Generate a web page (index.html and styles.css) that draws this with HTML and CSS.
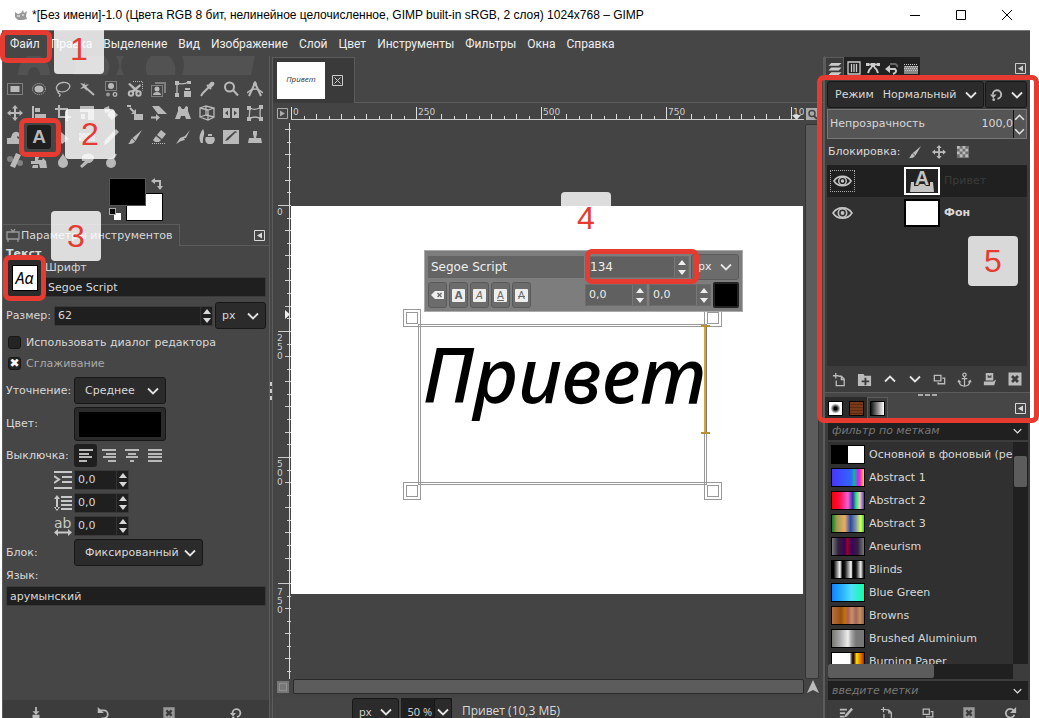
FILE: index.html
```
<!DOCTYPE html>
<html lang="ru">
<head>
  <meta charset="utf-8">
  <title>GIMP</title>
  <link rel="stylesheet" href="styles.css">
</head>
<body>
  <svg class="defs" width="0" height="0">
    <symbol id="chev" viewBox="0 0 12 8"><path d="M1 1.500 6 6.500 11 1.500" fill="none" stroke="#e4e4e4" stroke-width="1.800"/></symbol>
    <symbol id="up" viewBox="0 0 8 5"><path d="M0 5 4 0 8 5z"/></symbol>
    <symbol id="down" viewBox="0 0 8 5"><path d="M0 0 4 5 8 0z"/></symbol>
    <symbol id="menu-btn" viewBox="0 0 11 11"><path d="M.5.5h10v10H.5z" fill="none" stroke="currentColor"/><path d="M8 2.500v6L3 5.500z"/></symbol>
    <symbol id="eye" viewBox="0 0 20 14"><path d="M1 7C5 .5 15 .5 19 7 15 13.500 5 13.500 1 7z" fill="none" stroke="currentColor" stroke-width="1.600"/><circle cx="10" cy="7" r="4" fill="none" stroke="currentColor" stroke-width="1.500"/><circle cx="10" cy="7" r="1.800"/></symbol>
    <symbol id="new" viewBox="0 0 16 16"><path d="M7 4.500h3l3 3v7H4.500V9M10 4v4h3M4 1v6M1 4h6" fill="none" stroke="currentColor" stroke-width="1.400"/></symbol>
    <symbol id="dup" viewBox="0 0 16 16"><path d="M2.500 3.500h7v6h-7zM11 6.500h2.500v6h-7V11" fill="none" stroke="currentColor" stroke-width="1.400"/></symbol>
    <symbol id="del" viewBox="0 0 16 16"><path fill-rule="evenodd" d="M1.500 1.500h13v13h-13zM4 6 6 8l-2 2 2 2 2-2 2 2 2-2-2-2 2-2-2-2-2 2-2-2z"/></symbol>
    <symbol id="undo" viewBox="0 0 16 16"><path d="M4 5h5a4.500 4.500 0 0 1 0 9H6" fill="none" stroke="currentColor" stroke-width="2"/><path d="M2 1v7h7z"/></symbol>
    <symbol id="reset" viewBox="0 0 16 16"><path d="M4 8a4.500 4.500 0 1 1 5 4.500" fill="none" stroke="currentColor" stroke-width="2"/><path d="M1 8h7l-3.500 4z"/><circle cx="5" cy="13.500" r="1.500"/></symbol>
    <symbol id="brush" viewBox="0 0 16 16"><path d="M15 1 8.500 12 5.500 9zM5 9.500l3 3C7 14.500 4 15 1 15c2-1 2-4 4-5.500z"/></symbol>
    <symbol id="move" viewBox="0 0 16 16"><path d="M8 0l3 3.500H9V7h3.500V5L16 8l-3.500 3V9H9v3.500h2L8 16l-3-3.500h2V9H3.500v2L0 8l3.500-3v2H7V3.500H5z"/></symbol>
  </svg>

  <div class="window">
    <header class="titlebar">
      <svg class="wilber" viewBox="0 0 14 12"><path d="M1 3l3 2 3-1 2-3 1 3 3-2-1 5 1 3-4 1H4L1 8z"/><path d="M3 7h3M8 6h2" stroke="#fff"/></svg>
      <span class="title">*[Без имени]-1.0 (Цвета RGB 8 бит, нелинейное целочисленное, GIMP built-in sRGB, 2 слоя) 1024x768 – GIMP</span>
      <button class="win-btn" aria-label="Свернуть"><svg viewBox="0 0 12 12"><path d="M1 6.500h10"/></svg></button>
      <button class="win-btn" aria-label="Развернуть"><svg viewBox="0 0 12 12"><path d="M1.500 1.500h9v9h-9z"/></svg></button>
      <button class="win-btn" aria-label="Закрыть"><svg viewBox="0 0 12 12"><path d="M1 1l10 10M11 1 1 11"/></svg></button>
    </header>

    <nav class="menubar">
      <a href="#">Файл</a><a href="#">Правка</a><a href="#">Выделение</a><a href="#">Вид</a><a href="#">Изображение</a><a href="#">Слой</a><a href="#">Цвет</a><a href="#">Инструменты</a><a href="#">Фильтры</a><a href="#">Окна</a><a href="#">Справка</a>
      <div class="mark mark-file"></div>
      <div class="badge badge-1">1</div>
    </nav>

    <main class="main">
      <aside class="dock left">
        <svg class="mascot" viewBox="0 0 268 19">
          <path d="M15 19a18 22 0 0 1 10-19h12a18 22 0 0 1 10 19H37a6 8 0 0 0-12 0zM70 19q6-10 0-19h32q8 10 2 19zM113 0h8q-6 9 0 19h-8q6-9 0-19zM144 19q-4-12 4-19h18q8 7 6 19zM179 0h73l-4 19h-69q4-10 0-19z"/>
        </svg>
        <div class="tools">
          <button><svg viewBox="0 0 16 16"><path d="M.5 2.500h15v11H.5z" class="dash"/><path d="M3.500 5h9v6h-9z"/></svg></button>
          <button><svg viewBox="0 0 16 16"><ellipse cx="8" cy="8" rx="6.500" ry="5.500" class="dash"/><ellipse cx="8" cy="8" rx="4.500" ry="3.500"/></svg></button>
          <button><svg viewBox="0 0 16 16"><path class="ln" d="M4 11C-1 8 2 2 8 1.500s8 3 6 6-6 4-9 3c-2-1-3 1-1 2s1 2 0 3"/></svg></button>
          <button><svg viewBox="0 0 16 16"><path class="ln2" d="M6 6l9 8"/><path d="M5 1l1 3 4-1-3 3 1 4-3-3-4 1 3-3-3-3 4 1z"/></svg></button>
          <button><svg viewBox="0 0 16 16"><path d="M2.500.5h11v9h-11z" class="dash"/><circle cx="8" cy="5" r="3"/><circle cx="5" cy="13.500" r="2" opacity=".7"/><circle cx="12" cy="13.500" r="1.800" class="ln"/></svg></button>
          <button><svg viewBox="0 0 16 16"><path class="dash" d="M6 .5h9.500v9"/><path d="M1 3l2-1 9 8-2 2zM13 3l1 2-8 7-2-2z"/><circle cx="4" cy="12.500" r="2.200" class="ln2"/><circle cx="11.500" cy="12.500" r="2.200" class="ln2"/></svg></button>
          <button><svg viewBox="0 0 16 16"><path d="M.5 4.500h11v11H.5z" class="dash"/><path d="M4 1h11v11h-2V3H4z" opacity=".5"/><circle cx="6" cy="8" r="2.500"/><path d="M2 14c0-4 8-4 8 0z"/></svg></button>
          <button><svg viewBox="0 0 16 16"><path class="ln" d="M2 15V2q6 2 12-1"/><path d="M0 0h4v4H0zM12 0h4v3h-4zM0 12h4v4H0zM10 7h5v2h-5zM9 10h7v6H9z"/></svg></button>
          <button><svg viewBox="0 0 16 16"><path d="M12 1c3-1 4 1 3 3l-3 3-3-3z"/><path class="ln2" d="M10 6l-6 6-2 3M8 4l4 4"/></svg></button>
          <button><svg viewBox="0 0 16 16"><circle cx="6.500" cy="6" r="4.500" class="ln2"/><path class="ln2" d="M10 9l5 5.500"/></svg></button>
          <button><svg viewBox="0 0 16 16"><path class="ln2" d="M8 2 2 15M8 2l6 13"/><path class="ln" d="M0 12q8-8 16 0M8 0v3"/><circle cx="8" cy="3" r="2"/></svg></button>

          <button><svg><use href="#move"/></svg></button>
          <button><svg viewBox="0 0 16 16"><path d="M1 1h2v15H1zM4 3h5v4H4zM4 9h11v4H4z"/></svg></button>
          <button><svg viewBox="0 0 16 16"><path class="ln2" d="M4 0v12h12M0 4h12v12"/></svg></button>
          <button><svg viewBox="0 0 16 16"><path d="M1 1h14v14H9V7H1zM2 9h4v5H2z"/></svg></button>
          <button><svg viewBox="0 0 16 16"><path d="M1 3l5-2 1 5 3-1 5 5-6 5-5-5 2-3-4 1z"/></svg></button>
          <button><svg viewBox="0 0 16 16"><path d="M7 9h9v6H7zM9 4v5H4z"/><path class="ln2" d="M0 1h4M3 3l4 4"/></svg></button>
          <button><svg viewBox="0 0 16 16"><path d="M1 1h7l8 8H7zM5 9l4 3.500L5 16v-2.500H0v-2h5z"/></svg></button>
          <button><svg viewBox="0 0 16 16"><path d="M3 2l2-1 2 3h2l2-3 2 1v4l3 8h-5l-1-3H6l-1 3H0l3-8z"/></svg></button>
          <button><svg viewBox="0 0 16 16"><path class="ln" d="M1 3l6-2 8 2v9l-6 3-8-3zM1 3l8 2 6-2M9 5v10M1 12l6-2 8 2M7 1v9"/></svg></button>
          <button><svg viewBox="0 0 16 16"><path fill-rule="evenodd" d="M0 3h7v10H0zM9 3h7v10H9zM2 8l3 2.500v-5zM14 8l-3-2.500v5z"/></svg></button>
          <button><svg viewBox="0 0 16 16"><path class="ln" d="M2 14 3 3q5 3 11-1-2 6 0 12-6-4-12 0z"/><path d="M0 1h4v4H0zM12 0h4v4h-4zM0 12h4v4H0zM12 12h4v4h-4z"/></svg></button>

          <button><svg viewBox="0 0 16 16"><path d="M0 15V9h3c2 0 1-5 5-6 4-1 6 3 4 5-2-2-3 1 0 2h4v5z"/></svg></button>
          <button class="active" aria-label="Текст">A</button>
          <button><svg viewBox="0 0 16 16"><path d="M6 3l8 7-7 5-5-6zM2 9c-3 5 1 5 0 0z"/><path class="ln" d="M5 1v6"/></svg></button>
          <button><svg viewBox="0 0 16 16"><path d="M0 4h16v8H0z" opacity=".5"/><path d="M0 4h2v2H0zM4 4h2v2H4zM8 4h2v2H8zM2 6h2v2H2zM6 6h2v2H6zM0 8h2v4H0z"/></svg></button>
          <button><svg viewBox="0 0 16 16"><path d="M13 0l3 3L5 14l-4 2 1-5z"/></svg></button>
          <button><svg><use href="#brush"/></svg></button>
          <button><svg viewBox="0 0 16 16"><path d="M10 1l5 4-4 5-5-4zM5 7l5 4-2 2H4L2 11z"/><path class="dash" d="M1 14.500h14"/></svg></button>
          <button><svg viewBox="0 0 16 16"><path d="M15 1 11 9H9l1 2-4 1-5 3 4-6 5-2z"/></svg></button>
          <button><svg viewBox="0 0 16 16"><path d="M4 0c3 5-1 8 0 14H2C-1 9 1 4 4 0zM7 8h8c2 3 0 6-2 7H9c-2-1-4-4-2-7zM9 5h4v2H9z"/></svg></button>
          <button><svg viewBox="0 0 16 16"><path fill-rule="evenodd" d="M0 1h16v14H0zM2 12l4-1 8-8-2-1-8 7z"/><path class="ln" d="M4 13l9-9"/></svg></button>
          <button><svg viewBox="0 0 16 16"><path d="M6 2h4v3L9 9h5l1 5H1l1-5h5L6 5z"/></svg></button>

          <button><svg viewBox="0 0 16 16"><path d="M9 0l5 2-6 13-5-2z"/><circle cx="3" cy="6" r="3" opacity=".5"/><circle cx="13" cy="10" r="3" opacity=".5"/></svg></button>
          <button><svg viewBox="0 0 16 16"><path d="M4 0h4v4l-1 3h4l1-2 3 3 1 7H9l-1-4H0V8h4z"/><path d="M2 12h5v3H1z"/></svg></button>
          <button><svg viewBox="0 0 16 16"><path d="M8 0c1 4 5 6 5 10a5 5 0 0 1-10 0c0-4 4-6 5-10z"/></svg></button>
          <button><svg viewBox="0 0 16 16"><path d="M3 3c4-4 11-3 12 1 0 4-3 6-6 6l-6 5-2-2 5-5c-2 0-4 0-3-2z"/></svg></button>
          <button><svg viewBox="0 0 16 16"><circle cx="8" cy="10" r="5"/><path class="ln2" d="M10 6l3-5"/></svg></button>
          <div class="mark mark-text"></div>
          <div class="badge badge-2">2</div>
        </div>
        <div class="colors">
          <div class="swatch bg"></div>
          <div class="swatch fg"></div>
          <div class="mini-bg"></div>
          <div class="mini-fg"></div>
          <svg class="swap" viewBox="0 0 12 12"><path class="ln2" d="M3 3h6v6"/><path d="M0 3l4-3v6zM6 8h6l-3 4z"/></svg>
        </div>

        <div class="tabrow">
          <div class="tab"><svg viewBox="0 0 14 13"><path class="ln" d="M1 3h12v7H1zM5 0l2 3 2-3M2 13v-3M12 13v-3"/></svg>Параметры инструментов</div>
          <svg class="corner"><use href="#menu-btn"/></svg>
          <div class="badge badge-3">3</div>
        </div>

        <section class="options">
          <h2>Текст</h2>
          <div class="font-row">
            <button class="font-btn"><span>Aα</span></button>
            <div class="font-field">
              <label for="font">Шрифт</label>
              <input id="font" type="text" value="Segoe Script">
            </div>
            <div class="mark mark-font"></div>
          </div>
          <div class="row size-row">
            <label for="size">Размер:</label>
            <div class="spin grow"><input id="size" type="text" value="62"><span class="steps"><button><svg><use href="#up"/></svg></button><button><svg><use href="#down"/></svg></button></span></div>
            <div class="select unit"><select aria-label="Единицы"><option>px</option></select><svg><use href="#chev"/></svg></div>
          </div>
          <label class="check"><input type="checkbox">Использовать диалог редактора</label>
          <label class="check on"><input type="checkbox" checked>Сглаживание</label>
          <div class="fields">
            <label for="hint">Уточнение:</label>
            <div class="select mid"><select id="hint"><option>Среднее</option></select><svg><use href="#chev"/></svg></div>
            <label for="color">Цвет:</label>
            <button id="color" class="color-btn"><span></span></button>
            <span>Выключка:</span>
            <div class="justify">
              <button class="active"><svg viewBox="0 0 14 13"><path d="M0 0h14v2H0zM0 4h10v2H0zM0 7h13v2H0zM0 11h8v2H0z"/></svg></button>
              <button><svg viewBox="0 0 14 13"><path d="M0 0h14v2H0zM4 4h10v2H4zM1 7h13v2H1zM6 11h8v2H6z"/></svg></button>
              <button><svg viewBox="0 0 14 13"><path d="M0 0h14v2H0zM3 4h8v2H3zM1 7h12v2H1zM5 11h4v2H5z"/></svg></button>
              <button><svg viewBox="0 0 14 13"><path d="M0 0h14v2H0zM0 4h14v2H0zM0 7h14v2H0zM0 11h14v2H0z"/></svg></button>
            </div>
            <label class="ic" for="indent"><svg viewBox="0 0 18 18"><path d="M0 0h18v2H0zM8 5h10v2H8zM8 10h10v2H8zM0 16h18v2H0z"/><path class="ln2" d="M0 5l5 3.500L0 12"/></svg></label>
            <div class="spin small"><input id="indent" type="text" value="0,0"><span class="steps"><button><svg><use href="#up"/></svg></button><button><svg><use href="#down"/></svg></button></span></div>
            <label class="ic" for="line"><svg viewBox="0 0 18 18"><path d="M7 2h11v2H7zM7 6h11v2H7zM7 10h11v2H7zM7 14h11v2H7zM2 3h2v12H2zM0 5l3-4 3 4zM0 13l3 4 3-4z"/></svg></label>
            <div class="spin small"><input id="line" type="text" value="0,0"><span class="steps"><button><svg><use href="#up"/></svg></button><button><svg><use href="#down"/></svg></button></span></div>
            <label class="ic letters" for="letter"><b>ab</b><svg viewBox="0 0 18 7"><path d="M0 3.500 4 0v2.500h10V0l4 3.500L14 7V4.500H4V7z"/></svg></label>
            <div class="spin small"><input id="letter" type="text" value="0,0"><span class="steps"><button><svg><use href="#up"/></svg></button><button><svg><use href="#down"/></svg></button></span></div>
            <label for="box">Блок:</label>
            <div class="select wide"><select id="box"><option>Фиксированный</option></select><svg><use href="#chev"/></svg></div>
          </div>
          <label class="lang" for="lang">Язык:</label>
          <input id="lang" type="text" value="арумынский">
        </section>
        <footer class="actions">
          <button><svg viewBox="0 0 16 16"><path d="M7 1h2v5h3L8 10 4 6h3zM4 10h8v6H4z"/></svg></button>
          <button><svg><use href="#undo"/></svg></button>
          <button class="dim"><svg><use href="#del"/></svg></button>
          <button><svg><use href="#reset"/></svg></button>
        </footer>
        <div class="side-grip"></div>
      </aside>

      <section class="center">
        <div class="image-tabs">
          <div class="image-tab"><span class="thumb">Привет</span><svg viewBox="0 0 11 11"><path d="M.5.5h10v10H.5zM2.500 2.500l6 6M8.500 2.500l-6 6" fill="none" stroke="#ccc"/></svg></div>
        </div>
        <div class="work">
          <svg class="corner-btn flip" viewBox="0 0 11 11"><use href="#menu-btn"/></svg>
          <svg class="ruler-h">
            <pattern id="ticks-h" width="125" height="15" patternUnits="userSpaceOnUse">
              <path d="M.5 1v13M13.500 10v4M25.500 8v6M38.500 10v4M50.500 8v6M63.500 10v4M75.500 8v6M88.500 10v4M100.500 8v6M113.500 10v4" stroke="#ddd"/>
            </pattern>
            <rect width="100%" height="15" fill="url(#ticks-h)"/>
            <rect y="13" width="100%" height="1" fill="#ccc"/>
            <text x="2" y="9">0</text><text x="127" y="9">250</text><text x="252" y="9">500</text><text x="377" y="9">750</text><text x="502" y="9">1000</text>
            <path d="M501 9h9l-4.500 5z" fill="#ddd"/>
          </svg>
          <svg class="corner-btn zoom" viewBox="0 0 12 12"><path d="M0 0h12v12H0z" fill="#aaa"/><circle cx="6" cy="5.500" r="3" fill="none" stroke="#444" stroke-width="1.500"/><path d="M8 8l3 3" stroke="#444" stroke-width="2"/></svg>

          <svg class="ruler-v">
            <pattern id="ticks-v" y="84" width="14" height="126" patternUnits="userSpaceOnUse">
              <path d="M1 .5h13M10 13.500h4M8 25.500h6M10 38.500h4M8 50.500h6M10 63.500h4M8 75.500h6M10 88.500h4M8 101.500h6M10 113.500h4" stroke="#ccc"/>
            </pattern>
            <rect y="2" width="14" height="100%" fill="url(#ticks-v)"/>
            <rect x="12" y="2" width="1" height="100%" fill="#ddd"/>
            <text x="0" y="94">0</text>
            <text><tspan x="0" y="220">2</tspan><tspan x="0" y="229">5</tspan><tspan x="0" y="238">0</tspan></text>
            <text><tspan x="0" y="346">5</tspan><tspan x="0" y="355">0</tspan><tspan x="0" y="364">0</tspan></text>
            <text><tspan x="0" y="474">7</tspan><tspan x="0" y="483">5</tspan><tspan x="0" y="492">0</tspan></text>
            <path d="M8 189v9l5-4.500z" fill="#eee"/>
          </svg>
          <div class="viewport">
            <div class="badge badge-4">&nbsp;</div>
            <div class="canvas">
              <div class="step-four">4</div>
              <div class="text-frame">
                <span class="script">Привет</span>
                <i class="handle tl"></i><i class="handle tr"></i><i class="handle bl"></i><i class="handle br"></i>
                <i class="caret"></i>
              </div>
              <div class="text-bar">
                <div class="bar-row">
                  <input class="bar-font" type="text" aria-label="Шрифт" value="Segoe Script">
                  <div class="spin bar-size"><input type="text" aria-label="Размер" value="134"><span class="steps"><button><svg><use href="#up"/></svg></button><button><svg><use href="#down"/></svg></button></span></div>
                  <div class="select bar-unit"><select aria-label="Единицы"><option>px</option></select><svg><use href="#chev"/></svg></div>
                </div>
                <div class="bar-row">
                  <button class="style"><svg viewBox="0 0 14 12"><path fill-rule="evenodd" d="M0 6l4-4h9v8H4zM6 4.500 7.500 6 6 7.500l1 1L8.500 7 10 8.500l1-1L9.500 6 11 4.500l-1-1L8.500 5 7 3.500z"/></svg></button>
                  <button class="style"><b>A</b></button>
                  <button class="style"><em>A</em></button>
                  <button class="style"><u>A</u></button>
                  <button class="style"><s>A</s></button>
                  <div class="spin bar-num first"><input type="text" aria-label="Базовая линия" value="0,0"><span class="steps"><button><svg><use href="#up"/></svg></button><button><svg><use href="#down"/></svg></button></span></div>
                  <div class="spin bar-num"><input type="text" aria-label="Кернинг" value="0,0"><span class="steps"><button><svg><use href="#up"/></svg></button><button><svg><use href="#down"/></svg></button></span></div>
                  <button class="bar-color" aria-label="Цвет текста"></button>
                </div>
                <div class="mark mark-size"></div>
              </div>
            </div>
          </div>
          <div class="scroll-v"></div>

          <svg class="corner-btn quick" viewBox="0 0 12 12"><path d="M0 0h12v12H0z" fill="#777"/><path d="M2.500 2.500h7v7h-7z" fill="none" stroke="#aaa" stroke-dasharray="1 1"/></svg>
          <div class="scroll-h"></div>
          <svg class="corner-btn nav" viewBox="0 0 12 13"><path d="M6 0l6 13-6-3-6 3z" fill="#bbb"/></svg>
        </div>
        <div class="status">
          <div class="select"><select aria-label="Единицы"><option>px</option></select><svg><use href="#chev"/></svg></div>
          <div class="zoom-box"><input type="text" aria-label="Масштаб" value="50 %"><button><svg><use href="#chev"/></svg></button></div>
          <span>Привет (10,3 МБ)</span>
        </div>
      </section>

      <aside class="dock right">
        <div class="dialog-tabs">
          <button class="current"><svg viewBox="0 0 14 15"><path d="M3 1h11l-3 3H0zM3 6h11l-3 3H0zM3 11h11l-3 3H0z"/></svg></button>
          <button><svg viewBox="0 0 14 14"><path class="ln" d="M1 1h12v12H1zM4.500 3v8M7 3v8M9.500 3v8"/></svg></button>
          <button><svg viewBox="0 0 14 14"><path class="ln2" d="M1 3.500h12M2 12q1-4 4-6M12 12q-1-4-4-6"/><path d="M0 2h3v3H0zM5 2h4v4H5zM11 2h3v3h-3z"/></svg></button>
          <button><svg viewBox="0 0 14 14"><path class="ln2" d="M5 3h5q3 1 2 3" opacity=".4"/><path class="ln2" d="M4 8h6q3 3-2 5"/><path d="M0 8l5-4v8z"/></svg></button>
          <button><svg viewBox="0 0 14 14"><path d="M0 5h14v8H0z" opacity=".6"/><path class="dash" d="M0 3.500h14M1 5.500h13M0 7.500h14M1 9.500h13"/></svg></button>
          <svg class="corner"><use href="#menu-btn"/></svg>
        </div>
        <section class="layers">
          <div class="mode-row">
            <div class="select mode"><label for="mode">Режим</label><select id="mode"><option>Нормальный</option></select><svg><use href="#chev"/></svg></div>
            <button class="mode-switch"><svg class="i16"><use href="#reset"/></svg><svg class="i12"><use href="#chev"/></svg></button>
          </div>
          <div class="opacity"><label for="opacity">Непрозрачность</label><input id="opacity" type="text" value="100,0"><span class="arrows"><svg class="turn"><use href="#chev"/></svg><svg><use href="#chev"/></svg></span></div>
          <div class="lock"><span>Блокировка:</span>
            <button><svg><use href="#brush"/></svg></button>
            <button><svg><use href="#move"/></svg></button>
            <button><svg viewBox="0 0 15 15"><path d="M1 1h13v13H1z" opacity=".4"/><path d="M1 1h3v3H1zM7 1h3v3H7zM4 4h3v3H4zM10 4h3v3h-3zM1 7h3v3H1zM7 7h3v3H7zM4 10h3v3H4zM10 10h3v3h-3z"/></svg></button>
          </div>
          <ul class="layer-list">
            <li class="selected"><svg class="eye focus"><use href="#eye"/></svg><span class="layer-thumb text-layer"><b>A</b><svg viewBox="0 0 24 12"><path d="M1 2h3v4h4l2-2h4l2 2h4V2h3l1 10H0z"/></svg></span><span>Привет</span></li>
            <li><svg class="eye"><use href="#eye"/></svg><span class="layer-thumb"></span><b>Фон</b></li>
          </ul>
          <div class="layer-actions">
            <button><svg><use href="#new"/></svg></button>
            <button><svg viewBox="0 0 16 16"><path fill-rule="evenodd" d="M1 2h6l1 2h7v11H1zM8 6v3H5v2h3v3h2v-3h3V9h-3V6z"/></svg></button>
            <button><svg class="i12 turn"><use href="#chev"/></svg></button>
            <button><svg class="i12"><use href="#chev"/></svg></button>
            <button><svg><use href="#dup"/></svg></button>
            <button><svg viewBox="0 0 16 16"><circle cx="8" cy="3" r="1.800" class="ln"/><path class="ln" d="M8 5v10M5 7h6M2 10q1 5 6 5t6-5M1 11l1-2 2 2M15 11l-1-2-2 2"/></svg></button>
            <button><svg viewBox="0 0 16 16"><path d="M4 1h8v8H4zM2 10h10l3-2-2 6H2z"/><path d="M6 3l2 1.500L10 3v3H6z" fill="#444"/></svg></button>
            <button><svg class="big"><use href="#del"/></svg></button>
          </div>
          <div class="badge badge-5">5</div>
        </section>
        <div class="grip"></div>
        <div class="brush-tabs">
          <button><i class="round"></i></button>
          <button><i class="wood"></i></button>
          <button class="current"><i class="fade"></i></button>
          <svg class="corner"><use href="#menu-btn"/></svg>
        </div>
        <section class="gradients">
          <div class="tag-field"><input type="text" aria-label="Фильтр" placeholder="фильтр по меткам"><svg><use href="#chev"/></svg></div>
          <div class="list-wrap">
            <ul class="gradient-list">
              <li><i class="g-fg"></i>Основной в фоновый (резкий)</li>
              <li><i class="g-a1"></i>Abstract 1</li>
              <li><i class="g-a2"></i>Abstract 2</li>
              <li><i class="g-a3"></i>Abstract 3</li>
              <li><i class="g-an"></i>Aneurism</li>
              <li><i class="g-bl"></i>Blinds</li>
              <li><i class="g-bg"></i>Blue Green</li>
              <li><i class="g-br"></i>Browns</li>
              <li><i class="g-al"></i>Brushed Aluminium</li>
              <li><i class="g-bp"></i>Burning Paper</li>
            </ul>
            <div class="list-scroll"><span></span></div>
          </div>
          <div class="list-hscroll"><span></span></div>
          <div class="tag-field"><input type="text" aria-label="Метки" placeholder="введите метки"><svg><use href="#chev"/></svg></div>
        </section>
        <footer class="actions">
          <button><svg viewBox="0 0 16 16"><path d="M1 3h8v2H1zM1 7h6v2H1zM1 11h5v2H1zM14 2l2 2-7 8-3 1 1-3z"/></svg></button>
          <button><svg><use href="#new"/></svg></button>
          <button><svg><use href="#dup"/></svg></button>
          <button class="dim"><svg><use href="#del"/></svg></button>
          <button><svg viewBox="0 0 16 16"><path class="ln2" d="M12 5a5 5 0 1 0 1 5"/><path d="M15 1v7H8z"/></svg></button>
        </footer>
        <div class="mark mark-layers"></div>
      </aside>
    </main>
  </div>
</body>
</html>
```
FILE: styles.css
```
* {
  box-sizing: border-box;
}

body {
  margin: 0;
  background: #fff;
  font: 11px/14px "DejaVu Sans", sans-serif;
  color: #d8d8d8;
  overflow: hidden;
}

button, input, select {
  margin: 0;
  padding: 0;
  border: 0;
  background: none;
  color: inherit;
  font: inherit;
  border-radius: 0;
  appearance: none;
  min-width: 0;
}

button {
  display: flex;
  align-items: center;
  justify-content: center;
}

svg {
  display: block;
  flex: none;
  fill: currentColor;
}

.defs {
  position: absolute;
}

ul, h2 {
  margin: 0;
  padding: 0;
  list-style: none;
}

.ln, .ln2, .dash {
  fill: none;
  stroke: currentColor;
}

.ln { stroke-width: 1.3; }
.ln2 { stroke-width: 2; }
.dash { stroke-dasharray: 1 1; }

/* window frame */
.window {
  display: flex;
  flex-direction: column;
  height: 100vh;
  margin: 0 9px 0 2px;
}

.titlebar {
  display: flex;
  align-items: center;
  height: 30px;
  background: #fff;
  color: #000;
  font: 12px/16px "Liberation Sans", sans-serif;
}

.wilber {
  width: 14px;
  height: 12px;
  margin: 0 4px 0 12px;
  color: #999;
}

.title {
  flex: 1;
  white-space: nowrap;
}

.win-btn {
  width: 46px;
  height: 28px;
}

.win-btn svg {
  width: 12px;
  height: 12px;
  fill: none;
  stroke: #000;
}

.menubar {
  position: relative;
  display: flex;
  gap: 11px;
  height: 26px;
  padding: 5px 8px;
  border-top: 1px solid #777;
  background: #464646;
  font: 12px/16px Roboto, sans-serif;
}

.menubar a {
  color: #eee;
  text-decoration: none;
}

.main {
  display: grid;
  grid-template-columns: 268px 1fr 206px;
  grid-template-rows: 1fr;
  flex: 1;
  min-height: 0;
  background: #464646;
}

/* step marks */
.mark {
  position: absolute;
  z-index: 5;
  border: 5px solid #e53b30;
  border-radius: 7px;
  pointer-events: none;
}

.badge {
  position: absolute;
  z-index: 4;
  width: 50px;
  height: 50px;
  border-radius: 4px;
  background: rgba(255, 255, 255, 0.82);
  color: #e53b30;
  font: 32px/50px "Liberation Sans", sans-serif;
  text-align: center;
}

.mark-file { left: -2px; top: -1px; width: 52px; height: 33px; }
.badge-1 { left: 52px; top: -7px; }
.mark-text { left: 16px; top: 41px; width: 42px; height: 39px; }
.badge-2 { left: 62px; top: 32px; }
.badge-3 { left: 48px; top: -13px; }
.mark-font { left: -3px; top: -4px; width: 43px; height: 46px; }
.badge-4 { left: 270px; top: 71px; }
.mark-size { left: 160px; top: -2px; width: 114px; height: 35px; }
.badge-5 { right: 12px; top: 156px; }
.mark-layers { left: -8px; right: -9px; top: 19px; height: 348px; }

/* shared controls */
.select {
  position: relative;
  display: flex;
  align-items: center;
  height: 27px;
  border: 1px solid #171717;
  border-radius: 3px;
  background: #2b2b2b;
}

.select select {
  flex: 1;
  height: 100%;
  padding: 0 20px 0 6px;
}

.select svg {
  position: absolute;
  right: 6px;
  width: 12px;
  height: 8px;
  pointer-events: none;
}

.spin {
  display: flex;
  height: 20px;
  background: #1f1f1f;
  border: 1px solid #3a3a3a;
}

.spin input {
  flex: 1;
  width: 0;
  padding: 0 3px;
}

.steps {
  display: flex;
  flex-direction: column;
  width: 12px;
  border-left: 1px solid #333;
}

.steps button {
  flex: 1;
}

.steps svg {
  width: 8px;
  height: 5px;
}

.corner {
  width: 11px;
  height: 11px;
}

.i12 { width: 12px; height: 8px; }
.i16 { width: 15px; height: 15px; }
.turn { transform: rotate(180deg); }

/* left dock */
.dock {
  position: relative;
  display: flex;
  flex-direction: column;
  min-height: 0;
  min-width: 0;
}

.left {
  border-left: 1px solid #5c5c5c;
  border-right: 1px solid #5c5c5c;
}

.side-grip {
  position: absolute;
  right: -3px;
  top: 326px;
  width: 2px;
  height: 18px;
  background: repeating-linear-gradient(#ccc 0 4px, transparent 4px 7px);
}

.mascot {
  width: 268px;
  height: 19px;
  color: #525252;
}

.tools {
  position: relative;
  display: grid;
  grid-template-columns: repeat(11, 24px);
  grid-auto-rows: 24px;
  height: 98px;
  margin-top: 2px;
  color: #b9b9b9;
}

.tools svg {
  width: 16px;
  height: 16px;
}

.tools .active {
  border-radius: 3px;
  background: #1f1f1f;
  font: bold 19px/24px "Liberation Sans", sans-serif;
}

.colors {
  position: relative;
  height: 49px;
}

.swatch {
  position: absolute;
  width: 37px;
  height: 28px;
  border: 1px solid #222;
}

.fg { left: 106px; top: 3px; background: #000; border-color: #555; }
.bg { left: 123px; top: 18px; background: #fff; border-color: #000; }

.mini-fg, .mini-bg {
  position: absolute;
  width: 7px;
  height: 7px;
}

.mini-fg { left: 106px; top: 33px; background: #000; border: 1px solid #aaa; }
.mini-bg { left: 111px; top: 38px; background: #fff; }

.swap {
  position: absolute;
  left: 148px;
  top: 3px;
  width: 12px;
  height: 12px;
  color: #bbb;
}

.tabrow {
  position: relative;
  display: flex;
  align-items: center;
  justify-content: space-between;
  height: 22px;
  padding-right: 4px;
}

.tabrow::after {
  content: "";
  position: absolute;
  left: 177px;
  right: 0;
  bottom: 0;
  border-bottom: 1px solid #5c5c5c;
}

.tab {
  display: flex;
  align-items: center;
  gap: 1px;
  width: 177px;
  height: 22px;
  padding-left: 3px;
  border: 1px solid #5c5c5c;
  border-width: 1px 1px 0 0;
  white-space: nowrap;
}

.tab svg {
  width: 14px;
  height: 13px;
  color: #999;
}

.options {
  flex: 1;
  padding: 0 3px;
  min-height: 0;
}

.options h2 {
  height: 13px;
  font-size: 11px;
  line-height: 16px;
}

.font-row {
  position: relative;
  display: flex;
  height: 38px;
}

.font-btn {
  width: 37px;
  background: #2b2b2b;
}

.font-btn span {
  width: 26px;
  height: 26px;
  border: 1px solid #000;
  background: #fff;
  color: #000;
  font: italic 16px/24px "Noto Sans", sans-serif;
}

.font-field {
  flex: 1;
  display: flex;
  flex-direction: column;
}

.font-field label {
  height: 18px;
  padding-left: 2px;
  line-height: 18px;
}

.options input[type="text"] {
  background: #1f1f1f;
}

.font-field input {
  height: 20px;
  padding-left: 4px;
  border: 1px solid #3a3a3a;
}

.row {
  display: flex;
  align-items: center;
  gap: 2px;
}

.size-row {
  height: 27px;
  margin-top: 5px;
}

.grow { flex: 1; margin-left: 1px; }
.unit { width: 51px; }

.check {
  display: flex;
  align-items: center;
  gap: 5px;
  height: 21px;
}

.size-row + .check {
  margin-top: 3px;
}

.check input {
  display: grid;
  place-items: center;
  width: 13px;
  height: 13px;
  margin-left: 2px;
  border: 1px solid #171717;
  border-radius: 3px;
  background: #242424;
}

.check input:checked::before {
  content: "✖";
  color: #fff;
  font-size: 12px;
  line-height: 11px;
}

.on { color: #aaa; }

.fields {
  display: grid;
  grid-template-columns: 66px 1fr;
  grid-template-rows: 27px 34px 23px 20px 20px 20px 27px;
  gap: 3px 2px;
  align-items: center;
  margin-top: 3px;
}

.mid { width: 92px; }
.wide { width: 129px; }
.mid select, .wide select { padding-left: 10px; }

.color-btn {
  width: 92px;
  height: 34px;
  border: 1px solid #171717;
  border-radius: 3px;
  background: #2b2b2b;
}

.color-btn span {
  width: 82px;
  height: 25px;
  background: #000;
}

.justify {
  display: flex;
  color: #b9b9b9;
}

.justify button {
  width: 23px;
  height: 23px;
  border-radius: 3px;
}

.justify .active { background: #1f1f1f; }
.justify svg { width: 14px; height: 13px; }

.ic {
  justify-self: end;
  color: #c8c8c8;
}

.ic svg {
  width: 18px;
  height: 18px;
}

.letters b {
  display: block;
  font: 14px/12px "DejaVu Sans", sans-serif;
}

.letters svg { height: 7px; }
.small { width: 55px; }

.lang {
  display: block;
  height: 18px;
  line-height: 20px;
}

#lang {
  width: 100%;
  height: 20px;
  margin-top: 2px;
  padding: 0 3px;
  border: 1px solid #3a3a3a;
}

.actions {
  display: flex;
  height: 18px;
  padding-top: 5px;
  background: #3c3c3c;
  overflow: hidden;
  color: #bbb;
}

.actions button {
  flex: 1;
  height: 16px;
}

.actions svg {
  width: 14px;
  height: 14px;
}

.dim { color: #999; }

/* image window */
.center {
  display: flex;
  flex-direction: column;
  min-width: 0;
  min-height: 0;
  margin: 1px 0 0 2px;
  border: solid #5c5c5c;
  border-width: 0 1px;
}

.image-tabs {
  height: 46px;
  border-bottom: 1px solid #5c5c5c;
}

.image-tab {
  display: flex;
  align-items: center;
  gap: 7px;
  width: 82px;
  height: 46px;
  padding-left: 4px;
  border: 1px solid #5c5c5c;
  border-width: 1px 1px 0 0;
  background: #3a3a3a;
}

.image-tab svg {
  width: 11px;
  height: 11px;
}

.thumb {
  width: 48px;
  height: 37px;
  background: #fff;
  color: #444;
  font: italic 8px/34px "Noto Sans", sans-serif;
  text-align: center;
}

.work {
  display: grid;
  grid-template-columns: 14px 1fr 15px;
  grid-template-rows: 15px 1fr 15px;
  flex: 1;
  min-height: 0;
  padding: 3px 4px 4px;
  background: #444;
}

.corner-btn {
  width: 11px;
  height: 11px;
  align-self: center;
  color: #aaa;
}

.flip { transform: scaleX(-1); }
.zoom, .quick { width: 12px; height: 12px; }
.zoom { justify-self: center; }
.nav { width: 12px; height: 13px; justify-self: end; }

.ruler-h {
  width: 100%;
  height: 15px;
}

.ruler-v {
  width: 14px;
  height: 100%;
}

.ruler-h text, .ruler-v text {
  font-size: 9px;
  fill: #ccc;
}

.viewport {
  position: relative;
  overflow: hidden;
  min-height: 0;
}

.canvas {
  position: absolute;
  left: 0;
  top: 85px;
  right: 1px;
  height: 388px;
  background: #fff;
}

.viewport .badge-4 { z-index: 0; }

.step-four {
  position: absolute;
  left: 270px;
  top: -13px;
  width: 50px;
  color: #e53b30;
  font: 32px/50px "Liberation Sans", sans-serif;
  text-align: center;
}

.text-frame {
  position: absolute;
  left: 127px;
  top: 118px;
  width: 289px;
  height: 161px;
  border: 3px double #999;
}

.script {
  position: absolute;
  left: 2px;
  top: 2px;
  color: #000;
  font: italic 500 76px/90px "Noto Sans", sans-serif;
}

.handle {
  position: absolute;
  width: 18px;
  height: 18px;
  border: 4px double #999;
}

.tl { left: -18px; top: -18px; }
.tr { right: -18px; top: -18px; }
.bl { left: -18px; bottom: -18px; }
.br { right: -18px; bottom: -18px; }

.caret {
  position: absolute;
  right: -3px;
  top: -2px;
  width: 3px;
  height: 109px;
  background: #d9a52c;
  border: solid #777;
  border-width: 0 1px 0 0;
}

.caret::before, .caret::after {
  content: "";
  position: absolute;
  left: -3px;
  width: 9px;
  height: 2px;
  background: #b98f35;
}

.caret::before { top: 0; }
.caret::after { bottom: 0; }

.text-bar {
  position: absolute;
  left: 133px;
  top: 44px;
  width: 319px;
  padding: 3px;
  border: 1px solid #aaa;
  background: #7d7d7d;
  color: #eee;
}

.bar-row {
  display: flex;
  align-items: center;
  gap: 2px;
  height: 26px;
}

.bar-row + .bar-row {
  margin-top: 2px;
}

.bar-font {
  width: 156px;
  height: 22px;
  padding: 0 3px;
  background: #646464;
  font-size: 12px;
}

.text-bar .spin {
  height: 22px;
  border-color: #6c6c6c;
  background: #606060;
}

.text-bar .steps {
  width: 14px;
  border-color: #777;
  background: #666;
}

.bar-size {
  width: 103px;
  font-size: 12px;
}

.bar-unit {
  flex: 1;
  height: 26px;
  border-color: #5a5a5a;
  background: #6c6c6c;
}

.style {
  width: 19px;
  height: 26px;
  border: 1px solid #5a5a5a;
  border-radius: 3px;
  background: #6c6c6c;
}

.style svg {
  width: 14px;
  height: 12px;
}

.style b, .style em, .style u, .style s {
  width: 13px;
  height: 13px;
  border-radius: 1px;
  background: #eee;
  color: #666;
  font-size: 10px;
  line-height: 13px;
}

.bar-num { width: 62px; }
.first { margin-left: auto; }

.bar-color {
  width: 26px;
  height: 26px;
  border: 2px solid #222;
  border-radius: 2px;
  background: #000;
}

.scroll-v {
  margin: 3px 0 0 1px;
  border: 1px solid #333;
  border-radius: 2px;
  background: #5c5c5c;
}

.scroll-h {
  margin-left: 2px;
  border: 1px solid #2a2a2a;
  border-radius: 2px;
  background: #5c5c5c;
}

.status {
  display: flex;
  align-items: flex-start;
  gap: 2px;
  height: 20px;
  padding-left: 79px;
  overflow: hidden;
  font: 12px/26px "Open Sans", sans-serif;
}

.status .select {
  width: 47px;
  font-size: 11px;
}

.zoom-box {
  display: flex;
  width: 51px;
  height: 27px;
  background: #1f1f1f;
  font-size: 11px;
}

.zoom-box input {
  width: 33px;
  padding-right: 2px;
  text-align: right;
}

.zoom-box button {
  width: 18px;
  border: 1px solid #171717;
  border-radius: 3px;
  background: #2b2b2b;
}

.zoom-box svg {
  width: 12px;
  height: 8px;
}

.status span { margin-left: 8px; }

/* right dock */
.right {
  border-left: 1px solid #5c5c5c;
  background: #3c3c3c;
}

.dialog-tabs, .brush-tabs {
  display: flex;
  align-items: center;
  padding-right: 4px;
  background: #464646;
}

.dialog-tabs {
  height: 24px;
  color: #ccc;
}

.dialog-tabs button {
  width: 19px;
  height: 22px;
  background: #222;
}

.dialog-tabs button svg {
  width: 14px;
  height: 14px;
}

.dialog-tabs .current, .brush-tabs .current {
  background: #3c3c3c;
  border: 1px solid #5c5c5c;
  border-bottom: 0;
}

.dialog-tabs .corner, .brush-tabs .corner {
  margin-left: auto;
}

.layers {
  position: relative;
  padding: 1px 3px 0 2px;
}

.mode-row {
  display: flex;
  gap: 1px;
}

.mode {
  flex: 1;
  padding-left: 7px;
}

.mode select { padding: 0 0 0 9px; }

.mode-switch {
  width: 42px;
  gap: 7px;
  border: 1px solid #171717;
  border-radius: 3px;
  background: #2b2b2b;
  color: #bbb;
}

.opacity {
  display: flex;
  height: 30px;
  margin-top: 1px;
  border: 1px solid #777;
  background: #555;
  line-height: 28px;
}

.opacity label { padding-left: 2px; }

.opacity input {
  flex: 1;
  text-align: right;
}

.arrows {
  display: flex;
  flex-direction: column;
  justify-content: center;
  gap: 7px;
  width: 13px;
  border-left: 1px solid #111;
}

.arrows svg {
  width: 11px;
  height: 7px;
}

.lock {
  display: flex;
  align-items: center;
  gap: 10px;
  height: 26px;
  padding-left: 1px;
  color: #bbb;
}

.lock span { margin-right: -2px; color: #d8d8d8; }

.lock svg {
  width: 14px;
  height: 14px;
}

.layer-list {
  height: 201px;
  background: #303030;
}

.layer-list li {
  display: flex;
  align-items: center;
  height: 32px;
  padding-left: 3px;
}

.layer-list .selected {
  background: #202020;
  color: #3b3b3b;
}

.eye {
  width: 25px;
  height: 22px;
  margin-right: 49px;
  padding: 2px;
  color: #c4c4c4;
}

.focus { border: 1px dotted #aaa; }

.layer-thumb {
  position: relative;
  display: flex;
  flex-direction: column;
  align-items: center;
  width: 36px;
  height: 28px;
  margin-right: 4px;
  border: 2px solid #000;
  background: #fff;
}

.text-layer {
  border-color: #fff;
  background: #222;
  color: #c4c4c4;
}

.text-layer b {
  font: bold 20px/18px "Liberation Sans", sans-serif;
}

.text-layer svg {
  position: absolute;
  bottom: 1px;
  width: 24px;
  height: 12px;
}

.layer-actions {
  display: flex;
  height: 26px;
  color: #bbb;
}

.layer-actions button { flex: 1; }
.layer-actions svg { width: 15px; height: 15px; }
.layer-actions .i12 { width: 12px; height: 8px; }
.layer-actions .big { width: 16px; height: 16px; }

.grip {
  height: 5px;
  border-top: 1px solid #5c5c5c;
  background: repeating-linear-gradient(90deg, #aaa 0 5px, #464646 5px 7px) 93px 1px / 19px 2px no-repeat #464646;
}

.brush-tabs {
  height: 22px;
}

.brush-tabs button {
  width: 21px;
  height: 22px;
  background: #2b2b2b;
}

.brush-tabs i {
  width: 15px;
  height: 15px;
  border: 1px solid #000;
}

.round { background: radial-gradient(circle, #000 15%, #fff 55%); }
.wood { background: repeating-linear-gradient(#7b3818 0 2px, #5f2a12 2px 3px); }
.fade { background: linear-gradient(90deg, #111, #fff); }

.gradients {
  display: flex;
  flex-direction: column;
  flex: 1;
  min-height: 0;
  padding: 2px 2px 0 3px;
}

.tag-field {
  display: flex;
  align-items: center;
  height: 19px;
  padding: 0 6px 0 4px;
  background: #202020;
}

.tag-field input {
  flex: 1;
}

.tag-field input::placeholder {
  color: #777;
  opacity: 1;
  font-style: italic;
}

.tag-field svg {
  width: 9px;
  height: 6px;
}

.list-wrap {
  display: flex;
  flex: 1;
  min-height: 0;
  margin-top: 2px;
}

.gradient-list {
  flex: 1;
  min-width: 0;
  overflow: hidden;
  background: #303030;
}

.gradient-list li {
  display: flex;
  align-items: center;
  gap: 4px;
  height: 23px;
  padding-left: 3px;
  white-space: nowrap;
}

.gradient-list li:first-child {
  margin-top: 1px;
}

.gradient-list i {
  flex: none;
  width: 34px;
  height: 19px;
  border: 1px solid #000;
}

.g-fg { background: linear-gradient(90deg, #000 50%, #fff 50%); }
.g-a1 { background: linear-gradient(90deg, #4636ff, #3366ff 60%, #10b890 70%, #b030ff 80%, #ff20d0 88%, #ffe000); }
.g-a2 { background: linear-gradient(90deg, #f00, #ff1050 25%, #ef60d8 50%, #3030a0 65%, #20e090 75%, #ffd0a0 87%, #5030ff); }
.g-a3 { background: linear-gradient(90deg, #108020, #a09a50 15%, #e8ac68 40%, #2848a8 58%, #8898a0 75%, #d8ff60 90%, #20e020); }
.g-an { background: linear-gradient(90deg, #777, #302040 20%, #400050 40%, #a00020 48%, #400060 60%, #302040 80%, #777); }
.g-bl { background: linear-gradient(90deg, #000 5%, #fff 25%, #000 32%, #111 40%, #fff 60%, #000 65%, #111 75%, #eee 90%, #000); }
.g-bg { background: linear-gradient(90deg, #1080ff, #30c0ff 40%, #50e0f8 60%, #10ffa0); }
.g-br { background: linear-gradient(90deg, #b87040, #955010 28%, #c47010 40%, #b06048 50%, #c89070 62%, #a06858 75%, #c89060 88%, #906048); }
.g-al { background: linear-gradient(90deg, #777870, #aaa 25%, #eee 50%, #aaa 60%, #777 75%, #777); }
.g-bp { background: linear-gradient(90deg, #fff 55%, #222 63%, #400 68%, #ffe000 77%, #c02000); }

.list-scroll {
  width: 15px;
  padding: 14px 1px 0;
  background: #202020;
}

.list-scroll span {
  display: block;
  height: 31px;
  border-radius: 2px;
  background: #5c5c5c;
}

.list-hscroll {
  height: 15px;
  margin: 0 15px 2px 0;
  background: #202020;
}

.list-hscroll span {
  display: block;
  width: 106px;
  height: 14px;
  border-radius: 2px;
  background: #5c5c5c;
}
```
